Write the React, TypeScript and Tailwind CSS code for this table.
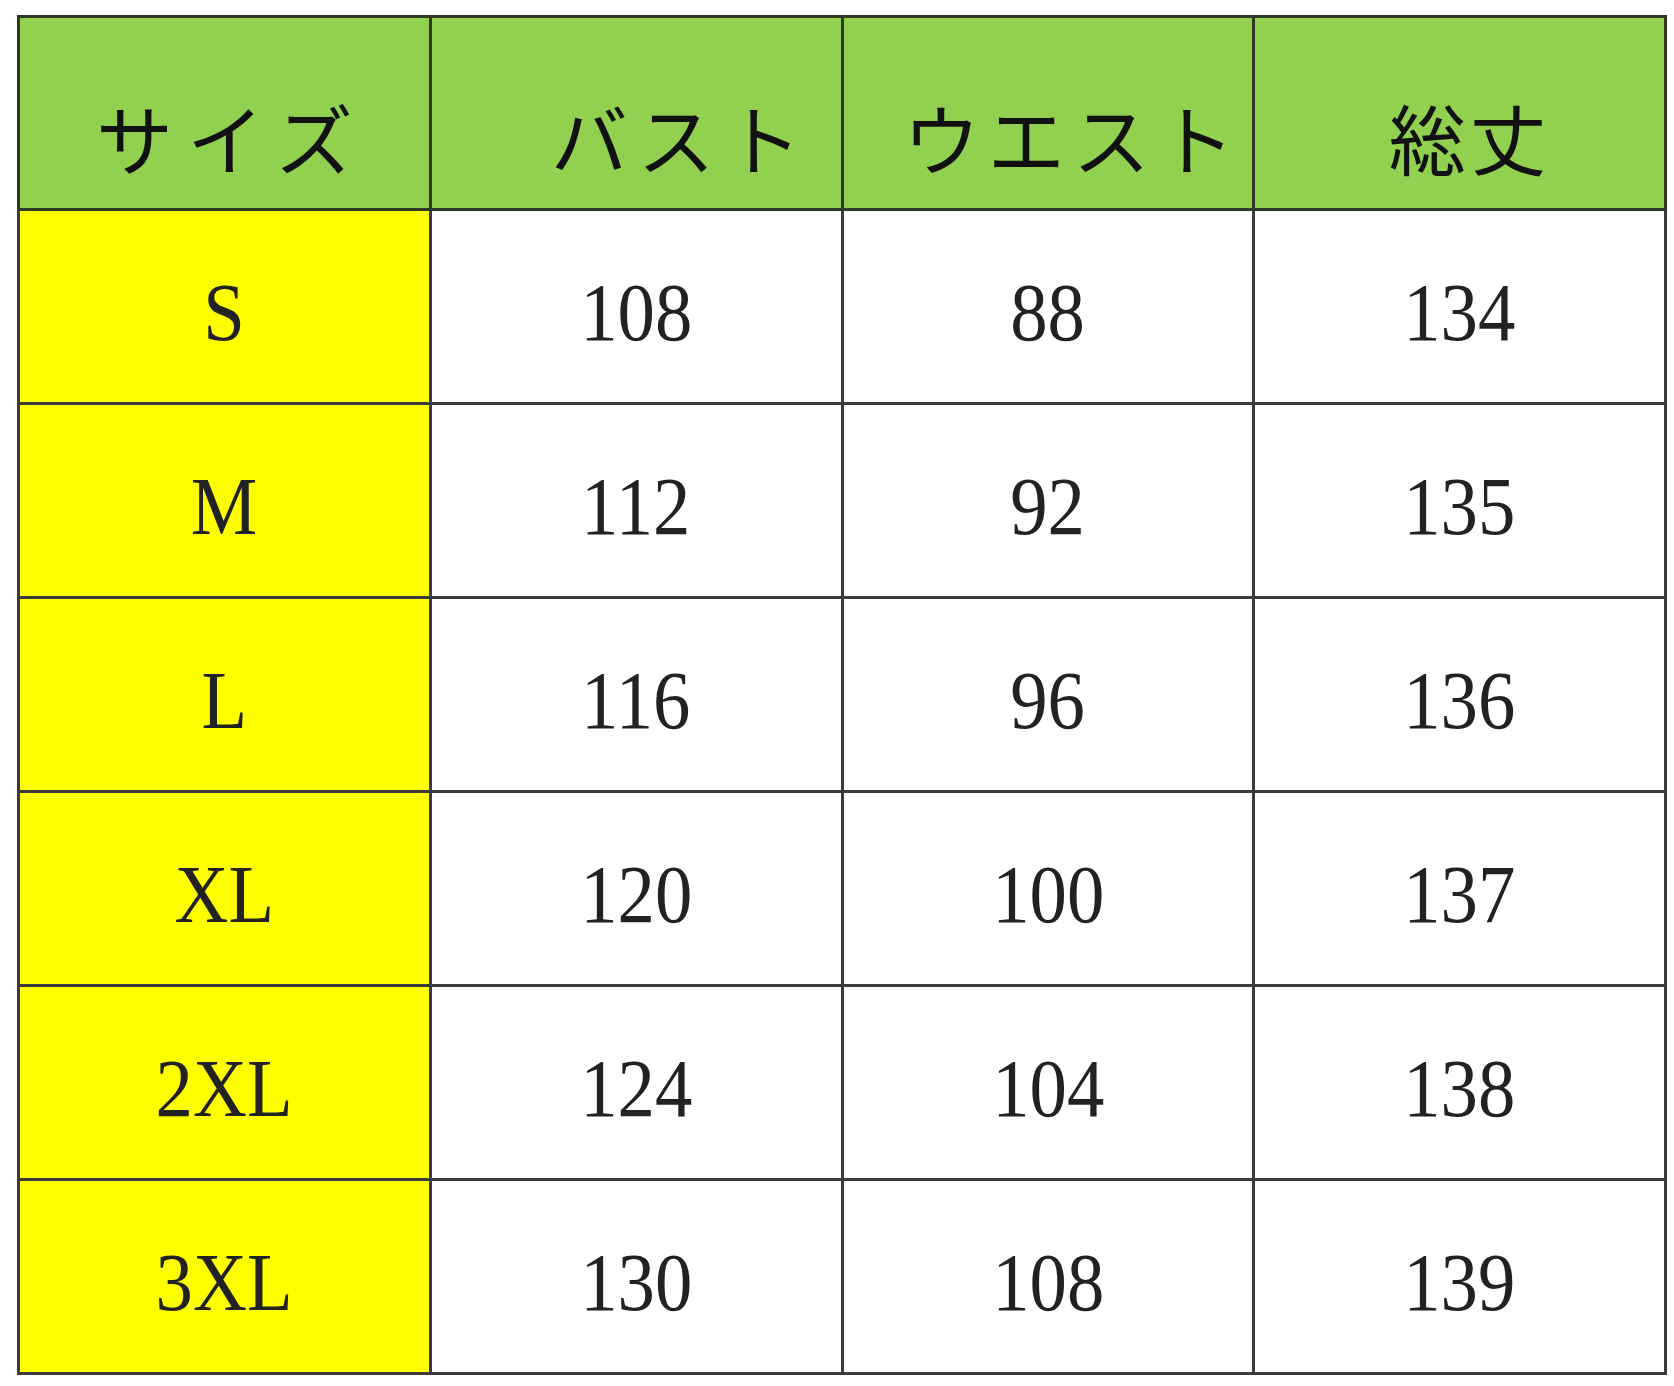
import * as React from 'react';

const headers = ['サイズ', 'バスト', 'ウエスト', '総丈'];

const rows = [
  { size: 'S', bust: 108, waist: 88, length: 134 },
  { size: 'M', bust: 112, waist: 92, length: 135 },
  { size: 'L', bust: 116, waist: 96, length: 136 },
  { size: 'XL', bust: 120, waist: 100, length: 137 },
  { size: '2XL', bust: 124, waist: 104, length: 138 },
  { size: '3XL', bust: 130, waist: 108, length: 139 }
];

function Num({ children }: { children: React.ReactNode }) {
  return (
    <span className="inline-block origin-center scale-x-90 font-['Liberation_Serif',serif] text-[83px] leading-none text-[#222]">
      {children}
    </span>
  );
}

export default function App(): React.JSX.Element {
  return (
    <div className="h-[1386px] w-[1674px] overflow-hidden bg-white pl-[17px] pt-[15px]">
      <table className="w-[1650px] table-fixed border-collapse border-[3px] border-[#3b3b3b]">
        <thead>
          <tr className="h-[193px] bg-[#92d050]">
            {headers.map((h, i) => (
              <th
                key={h}
                className={
                  'border-[3px] border-[#2f3a25] pt-[48px] align-middle font-["Noto_Sans_CJK_JP",sans-serif] text-[77px] font-normal text-[#111] ' +
                  (i === 0 ? 'pl-[14px] tracking-[14px]' : i === 1 ? 'pl-[90px] tracking-[10px]' : i === 2 ? 'pl-[50px] tracking-[8px]' : 'pl-[20px] tracking-[4px]')
                }
              >
                {h}
              </th>
            ))}
          </tr>
        </thead>
        <tbody>
          {rows.map((r) => (
            <tr key={r.size} className="h-[194px]">
              <td className="border-[3px] border-[#3b3b3b] bg-[#ffff00] pt-[12px] text-center align-middle">
                <Num>{r.size}</Num>
              </td>
              <td className="border-[3px] border-[#3b3b3b] pt-[12px] text-center align-middle">
                <Num>{r.bust}</Num>
              </td>
              <td className="border-[3px] border-[#3b3b3b] pt-[12px] text-center align-middle">
                <Num>{r.waist}</Num>
              </td>
              <td className="border-[3px] border-[#3b3b3b] pt-[12px] text-center align-middle">
                <Num>{r.length}</Num>
              </td>
            </tr>
          ))}
        </tbody>
      </table>
    </div>
  );
}
